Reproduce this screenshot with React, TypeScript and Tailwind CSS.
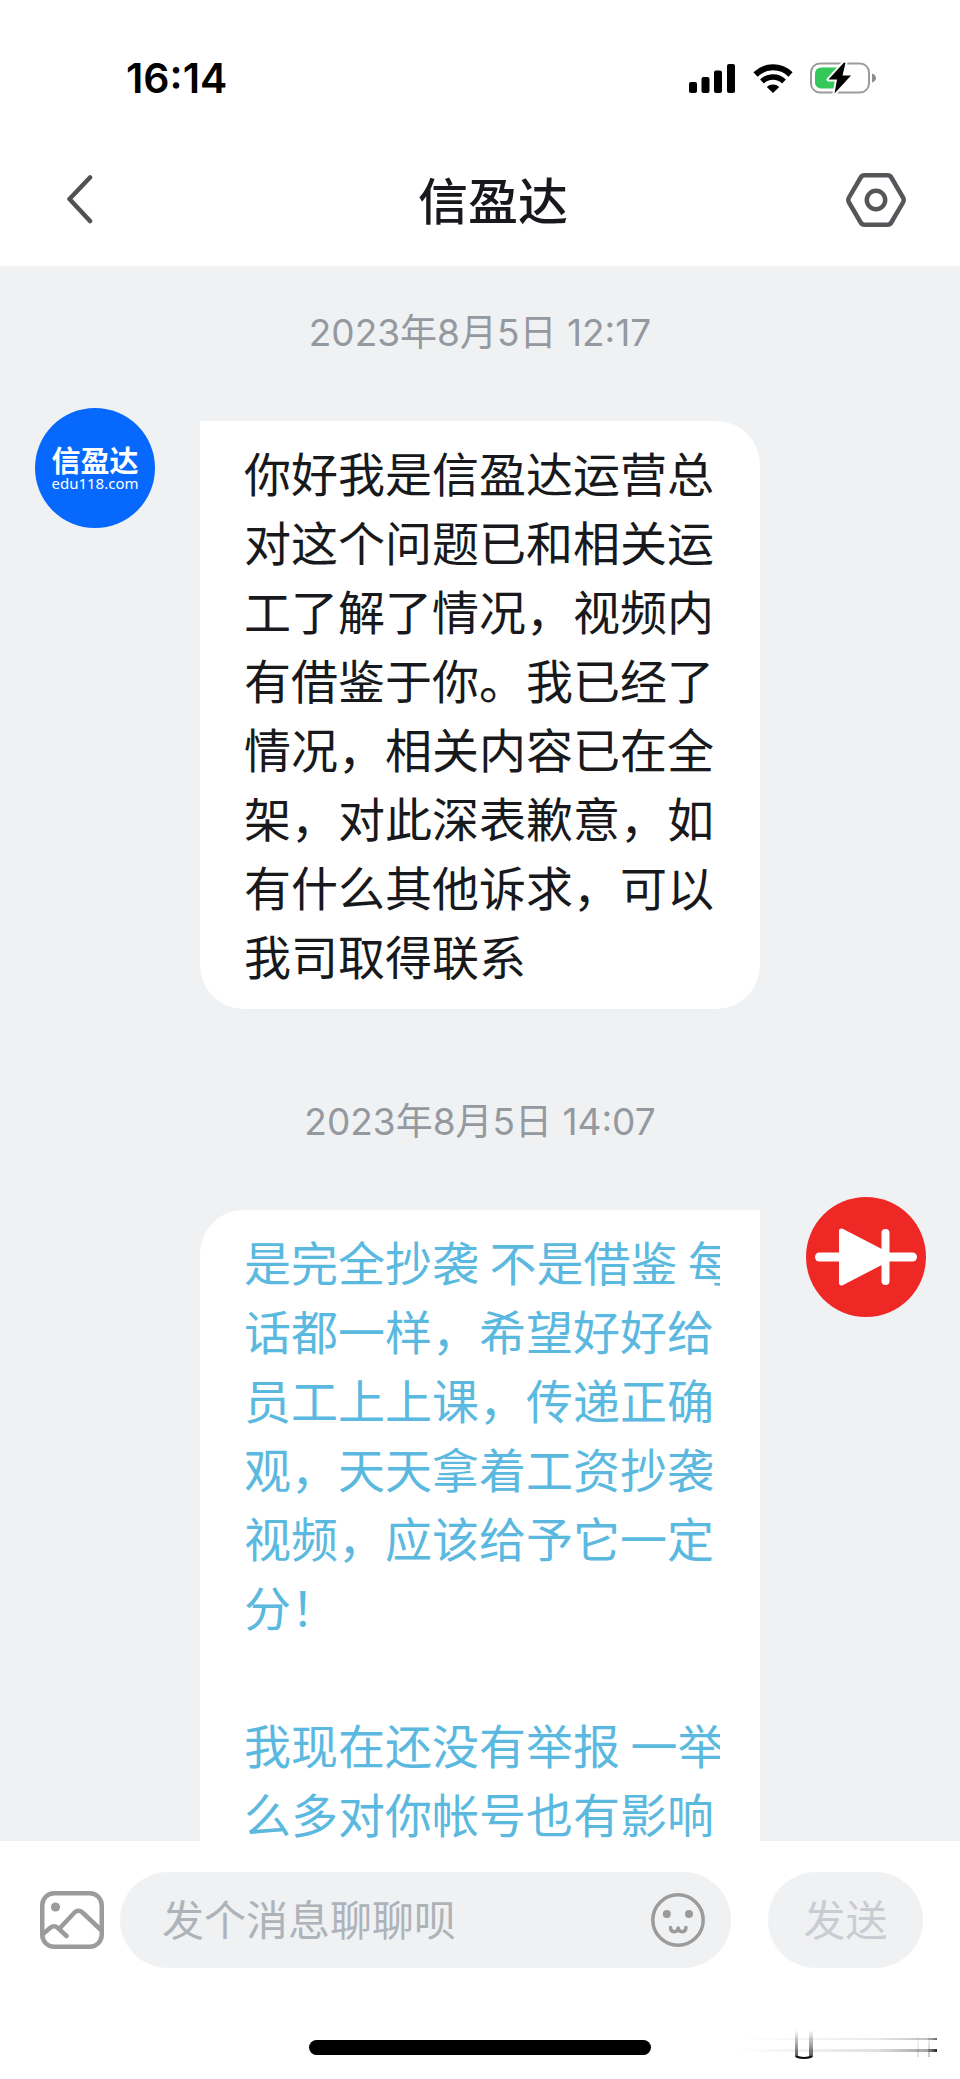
import React from "react";

type Message = {
    time: string;
    from: "them" | "me";
    lines: string[];
};

const messages: Message[] = [
    {
        time: "2023年8月5日 12:17",
        from: "them",
        lines: [
            "你好我是信盈达运营总",
            "对这个问题已和相关运",
            "工了解了情况，视频内",
            "有借鉴于你。我已经了",
            "情况，相关内容已在全",
            "架，对此深表歉意，如",
            "有什么其他诉求，可以",
            "我司取得联系",
        ],
    },
    {
        time: "2023年8月5日 14:07",
        from: "me",
        lines: [
            "是完全抄袭 不是借鉴 每",
            "话都一样，希望好好给",
            "员工上上课，传递正确",
            "观，天天拿着工资抄袭",
            "视频，应该给予它一定",
            "分！",
            "",
            "我现在还没有举报 一举",
            "么多对你帐号也有影响",
        ],
    },
];

const StatusBar = () => (
    <div className="flex h-[134px] shrink-0 items-center justify-between pt-[22px] pl-[126px] pr-[84px]">
        <p className="font-['Inter',sans-serif] text-[41px] leading-[48px] font-semibold text-black">
            16:14
        </p>
        <div className="flex items-center">
            <svg width="46" height="29" viewBox="0 0 46 29" className="mr-[18px]">
                <rect x="0" y="18" width="8" height="11" rx="2" />
                <rect x="12.5" y="13" width="8" height="16" rx="2" />
                <rect x="25" y="6.5" width="8" height="22.5" rx="2" />
                <rect x="38" y="0" width="8" height="29" rx="2" />
            </svg>
            <svg width="40" height="29" viewBox="0 0 40 29" className="mr-[17px]">
                <path d="M2.5 10.5a25 25 0 0 1 35 0" fill="none" stroke="#000" strokeWidth="6" />
                <path d="M9 17.5a15.8 15.8 0 0 1 22 0" fill="none" stroke="#000" strokeWidth="5.5" />
                <path d="M13.8 23a9 9 0 0 1 12.4 0L20 29z" />
            </svg>
            <svg width="66" height="32" viewBox="0 0 66 32">
                <rect x="1" y="1.5" width="58" height="29" rx="9" fill="none" stroke="#9b9b9e" strokeWidth="2" />
                <path d="M62 11.5c2.5.8 4 2.5 4 4.5s-1.5 3.7-4 4.5z" fill="#8e8e92" />
                <rect x="5" y="5.5" width="28" height="21" rx="6" fill="#34c759" />
                <path
                    d="M34 0.5L18.5 17.5h8.5L24.5 31.5L41 13.5h-8.5L35.5 1z"
                    fill="#000"
                    stroke="#fff"
                    strokeWidth="4"
                    strokeLinejoin="round"
                    paintOrder="stroke"
                />
            </svg>
        </div>
    </div>
);

const Header = () => (
    <header className="flex h-[132px] shrink-0 items-center pl-14 pr-[54px]">
        <button type="button" aria-label="返回" className="w-[84px] pl-[10px] pb-0.5">
            <svg width="28" height="50" viewBox="0 0 28 50" fill="none" stroke="#4f5155" strokeWidth="4.5" strokeLinecap="round" strokeLinejoin="round">
                <path d="M24 3.5L3.5 25L24 47" />
            </svg>
        </button>
        <h1 className="flex-1 pb-1 text-center text-[50px] leading-[64px] font-medium text-[#18191c]">
            信盈达
        </h1>
        <button type="button" aria-label="设置">
            <svg width="60" height="54" viewBox="0 0 60 54" fill="none" stroke="#54565a" strokeWidth="4.5">
                <path d="M18.500 2.300h23q2.500 0 3.800 2.200L57 24.500q1.400 2.500 0 5L45.300 49.500q-1.300 2.200-3.800 2.200h-23q-2.500 0-3.800-2.200L3 29.500q-1.400-2.500 0-5L14.700 4.500q1.300-2.200 3.800-2.200z" />
                <circle cx="30" cy="27" r="9.2" />
            </svg>
        </button>
    </header>
);

const BrandAvatar = () => (
    <div className="flex size-[120px] shrink-0 flex-col items-center justify-center rounded-full bg-[#0768fd] text-white">
        <p className="text-[29px] leading-[30px] font-bold">信盈达</p>
        <p className="font-['Noto_Sans',sans-serif] text-[15px] leading-[18px]">
            edu118.com
        </p>
    </div>
);

const DiodeAvatar = () => (
    <svg className="size-[120px] shrink-0" viewBox="0 0 120 120">
        <circle cx="60" cy="60" r="60" fill="#ee2825" />
        <g fill="#fff" stroke="#fff" strokeLinecap="round" strokeLinejoin="round">
            <path d="M13.5 60h93" strokeWidth="9" />
            <path d="M35.5 34L78 56v8L35.5 86z" strokeWidth="5" />
            <path d="M79.5 36v48" strokeWidth="8" />
        </g>
    </svg>
);

const ChatMessage = ({ time, from, lines }: Message) => {
    const mine = from === "me";

    return (
        <div className="mb-[88px]">
            <p className="mb-[50px] text-center font-['Inter','Noto_Sans_CJK_SC',sans-serif] text-[37px] leading-[50px] text-[#9499a0]">
                {time}
            </p>
            <div className={mine ? "flex gap-[46px] pl-[200px] pr-[34px]" : "flex gap-[45px] pl-[35px] pr-[200px]"}>
                {!mine && <BrandAvatar />}
                <div
                    className={
                        mine
                            ? "mt-[13px] min-w-0 flex-1 rounded-tl-[44px] bg-white pt-4 pb-5 pl-11 pr-10 text-[#5bb9df]"
                            : "mt-[13px] min-w-0 flex-1 rounded-[44px] rounded-tl-none bg-white pt-4 pb-5 pl-11 pr-10 text-[#18191c]"
                    }
                >
                    <p className="overflow-hidden text-[47px] leading-[69px] whitespace-pre">
                        {lines.join("\n")}
                    </p>
                </div>
                {mine && <DiodeAvatar />}
            </div>
        </div>
    );
};

const ImageIcon = () => (
    <svg width="64" height="58" viewBox="0 0 64 58" fill="none" stroke="#9b9b9b" strokeWidth="4.5" strokeLinecap="round">
        <rect x="2.25" y="2.25" width="59.5" height="53.5" rx="12" />
        <circle cx="15.5" cy="16" r="4.6" fill="#9b9b9b" stroke="none" />
        <path d="M3 43l7-6q4-3.5 8 0l8.5 8" />
        <path d="M20 37L34.5 21.5q4-3.5 8 0L61 39" />
    </svg>
);

const SmileIcon = () => (
    <svg width="54" height="54" viewBox="0 0 54 54" fill="none" stroke="#9b9b9b" strokeWidth="3.5" strokeLinecap="round" strokeLinejoin="round">
        <circle cx="27" cy="27" r="25.2" />
        <circle cx="15.8" cy="21" r="4" fill="#9b9b9b" stroke="none" />
        <circle cx="38" cy="21" r="4" fill="#9b9b9b" stroke="none" />
        <path d="M19.5 34.500c0 5.500 7 5.500 7.700.500c.7 5 7.700 5 7.700-.500" />
    </svg>
);

// faint fading strokes at the right of the home bar
const FadedMark = () => (
    <svg width="210" height="36" viewBox="0 0 210 36" className="absolute right-0 -top-3" aria-hidden="true">
        <defs>
            <linearGradient id="fadeX" x1="0" x2="1" y1="0" y2="0">
                <stop offset="0" stopColor="#000" stopOpacity="0" />
                <stop offset="0.7" stopColor="#000" stopOpacity="0.12" />
                <stop offset="0.95" stopColor="#000" stopOpacity="0.35" />
                <stop offset="1" stopColor="#000" stopOpacity="0.85" />
            </linearGradient>
            <linearGradient id="fadeY" x1="0" x2="0" y1="0" y2="1">
                <stop offset="0" stopColor="#000" stopOpacity="0" />
                <stop offset="1" stopColor="#000" stopOpacity="0.65" />
            </linearGradient>
        </defs>
        <rect x="8" y="10" width="199" height="2" fill="url(#fadeX)" opacity="0.7" />
        <rect x="8" y="21" width="199" height="3" fill="url(#fadeX)" />
        <rect x="65" y="2" width="3" height="27" fill="url(#fadeY)" />
        <rect x="79" y="2" width="4" height="27" fill="url(#fadeY)" />
        <path d="M66 28.5q8 3 16 0" fill="none" stroke="#111" strokeWidth="2" />
        <rect x="187" y="4" width="2" height="25" fill="url(#fadeY)" opacity="0.2" />
        <rect x="198" y="4" width="2" height="25" fill="url(#fadeY)" opacity="0.35" />
    </svg>
);

const Composer = () => (
    <footer className="shrink-0 bg-white pt-[31px] pb-6">
        <form className="flex items-center pl-10 pr-[37px]" onSubmit={(e) => e.preventDefault()}>
            <button type="button" aria-label="图片" className="mr-4">
                <ImageIcon />
            </button>
            <div className="mr-[37px] flex h-24 min-w-0 flex-1 items-center rounded-full bg-[#f0f1f3] pl-[42px] pr-[26px]">
                <input
                    type="text"
                    aria-label="消息"
                    placeholder="发个消息聊聊呗"
                    className="min-w-0 flex-1 bg-transparent pb-1 text-[42px] leading-[60px] text-[#18191c] outline-none placeholder:text-[#aeb3b9]"
                />
                <button type="button" aria-label="表情">
                    <SmileIcon />
                </button>
            </div>
            <button
                type="submit"
                className="h-24 w-[155px] rounded-full bg-[#f0f1f3] pb-1 text-[42px] leading-[60px] text-[#c9ccd2]"
            >
                发送
            </button>
        </form>
        <div className="relative mt-[72px] mr-5">
            <div className="ml-5 flex justify-center">
                <div className="h-[15px] w-[342px] rounded-full bg-black" />
            </div>
            <FadedMark />
        </div>
    </footer>
);

const App = () => {
    return (
        <div
            lang="zh-CN"
            className="flex h-screen flex-col bg-white font-['Noto_Sans_CJK_SC',sans-serif]"
        >
            <StatusBar />
            <Header />
            <main className="min-h-0 flex-1 overflow-hidden bg-[#f0f1f3] pt-[42px]">
                {messages.map((message) => (
                    <ChatMessage key={message.time} {...message} />
                ))}
            </main>
            <Composer />
        </div>
    );
};

export default App;
